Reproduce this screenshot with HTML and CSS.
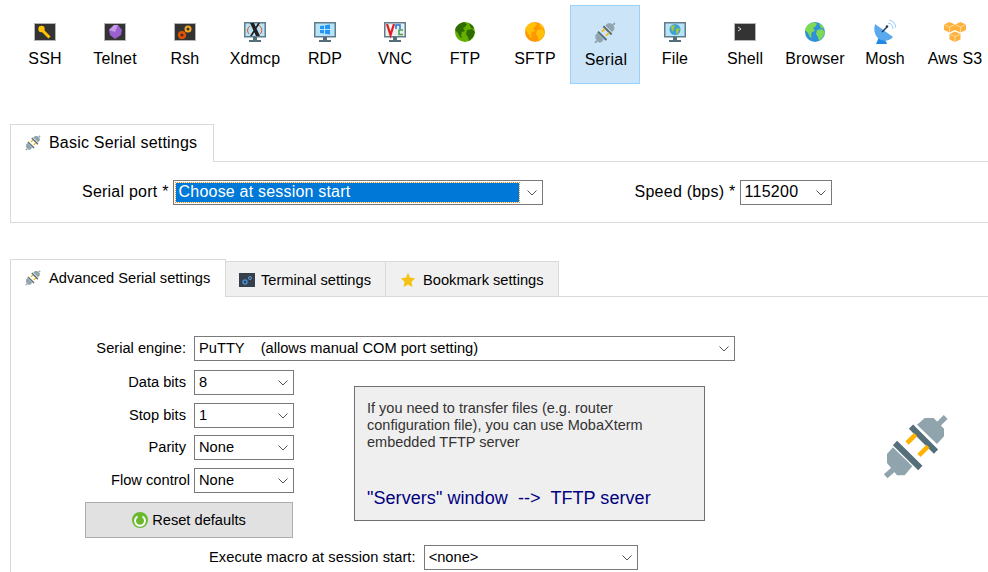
FILE: index.html
```html
<!DOCTYPE html>
<html lang="en">
<head>
<meta charset="utf-8">
<title>Serial session settings</title>
<link rel="stylesheet" href="styles.css">
</head>
<body>
<svg class="defs" width="0" height="0" aria-hidden="true">
  <defs>
    <symbol id="plug" viewBox="70 38 198 198">
      <path fill="#90a4ae" d="M172 70 195 50h27l31 32v23l-21 23zM100 138 82 158v27l30 37h23l23-27z"/>
      <path stroke="#90a4ae" stroke-width="16" fill="none" d="M235 70 258 47M78 225l22-20"/>
      <path stroke="#546e7a" stroke-width="18" fill="none" d="M154 76l75 75M106 125l76 75"/>
      <path stroke="#ffb300" stroke-width="14" fill="none" d="M142 125l26-25M178 162l27-27"/>
    </symbol>
    <symbol id="chev" viewBox="0 0 10 6">
      <path d="M.5.5 5 5 9.5.5" fill="none" stroke="#555" stroke-width="1"/>
    </symbol>
    <symbol id="globe-land" viewBox="0 0 20 20">
      <path d="M4 2 9 0l3 2-2 3-2 1 2 3-3 1-1 3 1 3-2-1-2-4-3-3 1-3zM12 8l5-1 3 3-2 5-4 4-1-4-2-3zM14 1l4 3 1 3-3-1-1-2z"/>
    </symbol>
    <symbol id="monitor" viewBox="0 0 22 20">
      <rect x=".75" y=".75" width="20.5" height="14" fill="#b9e3f8" stroke="#607d8b" stroke-width="1.5"/>
      <path fill="#546e7a" d="M9 15h4v3H9zM5 18h12v2H5z"/>
    </symbol>
  </defs>
</svg>

<nav class="toolbar">
  <div class="tool">
    <svg class="ico" width="22" height="18" viewBox="0 0 22 18"><rect x=".5" y=".5" width="21" height="17" fill="#333" stroke="#b5b5b5"/><circle cx="7.5" cy="6" r="3.2" fill="#ffc107"/><path d="M9 8l6.500 6.500" stroke="#ffc107" stroke-width="3"/></svg>
    <span>SSH</span>
  </div>
  <div class="tool">
    <svg class="ico" width="22" height="18" viewBox="0 0 22 18"><rect x=".5" y=".5" width="21" height="17" fill="#333" stroke="#b5b5b5"/><path fill="#9c5fd0" d="M10 2h4l4 5-1 5-6 4-5-4-1-5z"/><path fill="#c79be8" d="M10 2 5 7l6 2 3-7z"/></svg>
    <span>Telnet</span>
  </div>
  <div class="tool">
    <svg class="ico" width="22" height="18" viewBox="0 0 22 18"><rect x=".5" y=".5" width="21" height="17" fill="#333" stroke="#b5b5b5"/><circle cx="14" cy="6" r="2.5" fill="none" stroke="#f9a825" stroke-width="2"/><circle cx="8" cy="12" r="2.8" fill="none" stroke="#e65100" stroke-width="2.6"/></svg>
    <span>Rsh</span>
  </div>
  <div class="tool">
    <svg class="ico" width="22" height="20" viewBox="0 0 22 20"><use href="#monitor"/><path fill="none" stroke="#e65100" d="M14 3c4 1 5 7 2 9M6 4C3 6 3 10 5 12"/><path d="M6 1h4l6 13h-4zM14 1h2L8 14H6z" fill="#212121"/></svg>
    <span>Xdmcp</span>
  </div>
  <div class="tool">
    <svg class="ico" width="22" height="20" viewBox="0 0 22 20"><use href="#monitor"/><path fill="#2196f3" d="M6 4l4-.6V7H6zM11 3.3 16 2.5V7h-5zM6 8h4v3.6L6 11zM11 8h5v4.5l-5-.8z"/></svg>
    <span>RDP</span>
  </div>
  <div class="tool">
    <svg class="ico" width="22" height="20" viewBox="0 0 22 20"><rect x=".75" y=".75" width="20.5" height="14" fill="#eceff1" stroke="#607d8b" stroke-width="1.5"/><path fill="#546e7a" d="M9 15h4v3H9zM5 18h12v2H5z"/><path d="M3 2l3.500 11L10 2" fill="none" stroke="#e02020" stroke-width="2.2"/><path d="M12 7V3h4v4" fill="none" stroke="#1976d2" stroke-width="1.5"/><path d="M19 8h-4v4.500h4" fill="none" stroke="#43a047" stroke-width="1.5"/></svg>
    <span>VNC</span>
  </div>
  <div class="tool">
    <svg class="ico" width="20" height="20" viewBox="0 0 20 20"><circle cx="10" cy="10" r="10" fill="#64b000"/><use href="#globe-land" fill="#2e6b00"/></svg>
    <span>FTP</span>
  </div>
  <div class="tool">
    <svg class="ico" width="20" height="20" viewBox="0 0 20 20"><circle cx="10" cy="10" r="10" fill="#ff9800"/><use href="#globe-land" fill="#ffc107"/></svg>
    <span>SFTP</span>
  </div>
  <div class="tool tool-active">
    <svg class="ico" width="22" height="22"><use href="#plug"/></svg>
    <span>Serial</span>
  </div>
  <div class="tool">
    <svg class="ico" width="22" height="20" viewBox="0 0 22 20"><use href="#monitor"/><circle cx="11" cy="7.5" r="5.500" fill="#3f9fd8"/><path fill="#a8c832" d="M7 4l4-1-1 4-2 3zM12 7l4-1-2 5-2 1z"/></svg>
    <span>File</span>
  </div>
  <div class="tool">
    <svg class="ico" width="22" height="18" viewBox="0 0 22 18"><rect x=".5" y=".5" width="21" height="17" fill="#333" stroke="#b5b5b5"/><path d="M4 4l3 2-3 2" fill="none" stroke="#ddd"/></svg>
    <span>Shell</span>
  </div>
  <div class="tool">
    <svg class="ico" width="20" height="20" viewBox="0 0 20 20"><circle cx="10" cy="10" r="10" fill="#2f8fd8"/><use href="#globe-land" fill="#7ed957"/></svg>
    <span>Browser</span>
  </div>
  <div class="tool">
    <svg class="ico ico-dish" width="22" height="24" viewBox="0 0 22 24"><path fill="#1e88e5" d="M5 17h5l3 7H2z"/><path fill="#5aa9ec" d="M1 4 19 17C12 25-3 20 1 4z"/><path stroke="#1a3a6a" stroke-width="1.5" d="M8 12 13 7"/><circle cx="13" cy="6.500" r="1.300" fill="#1a3a6a"/><path fill="none" stroke="#90caf9" d="M14 3a6 6 0 0 1 5 6M15 0a9 9 0 0 1 7 8"/></svg>
    <span>Mosh</span>
  </div>
  <div class="tool">
    <svg class="ico" width="22" height="20" viewBox="0 0 22 20"><path fill="#ffb13d" d="M5.500 0 11 2.500V8L5.500 10.500 0 8V2.500zM16.500 0 22 2.500V8L16.500 10.500 11 8V2.500zM11 9.500 16.500 12V17.500L11 20 5.500 17.500V12z"/><path fill="none" stroke="#fff3d6" stroke-width=".6" d="M0 2.500 5.500 5 11 2.500M5.500 5v5.500M11 2.500 16.500 5 22 2.500M16.500 5v5.500M5.500 12 11 14.500 16.500 12M11 14.500V20"/></svg>
    <span>Aws S3</span>
  </div>
</nav>

<section class="group group-basic">
  <div class="tabs">
    <div class="tab tab-active tab-basic">
      <svg class="tab-ico" width="16" height="16"><use href="#plug"/></svg>
      <span>Basic Serial settings</span>
    </div>
  </div>
  <div class="panel basic-panel">
    <label class="lbl-big lbl-port">Serial port *</label>
    <div class="select select-port">
      <span class="focus-value">Choose at session start</span>
      <svg class="chev" width="10" height="6"><use href="#chev"/></svg>
    </div>
    <label class="lbl-big lbl-speed">Speed (bps) *</label>
    <div class="select select-speed">
      <span class="val-big">115200</span>
      <svg class="chev" width="10" height="6"><use href="#chev"/></svg>
    </div>
  </div>
</section>

<section class="group group-adv">
  <div class="tabs">
    <div class="tab tab-active tab-adv">
      <svg class="tab-ico" width="16" height="16"><use href="#plug"/></svg>
      <span>Advanced Serial settings</span>
    </div>
    <div class="tab tab-idle tab-term">
      <svg class="tab-ico" width="16" height="14" viewBox="0 0 16 14"><rect width="16" height="14" fill="#37404a"/><circle cx="6" cy="9" r="2" fill="none" stroke="#3f8fd8" stroke-width="1.5"/><circle cx="11" cy="5" r="1.5" fill="none" stroke="#5aa0e0"/></svg>
      <span>Terminal settings</span>
    </div>
    <div class="tab tab-idle tab-book">
      <svg class="tab-ico" width="16" height="16" viewBox="0 0 16 16"><path fill="#f5c211" d="M8 1l2.200 4.700 5 .6-3.700 3.500 1 5.100L8 12.400 3.500 14.900l1-5.100L.8 6.300l5-.6z"/></svg>
      <span>Bookmark settings</span>
    </div>
  </div>
  <div class="panel adv-panel">
    <div class="row row-engine">
      <label class="lbl lbl-col">Serial engine:</label>
      <div class="select select-engine">
        <span class="val val-pre">PuTTY    (allows manual COM port setting)</span>
        <svg class="chev" width="10" height="6"><use href="#chev"/></svg>
      </div>
    </div>
    <div class="middle">
      <div class="fields">
        <div class="row"><label class="lbl lbl-col">Data bits</label><div class="select select-small"><span class="val">8</span><svg class="chev" width="10" height="6"><use href="#chev"/></svg></div></div>
        <div class="row row-wide"><label class="lbl lbl-col">Stop bits</label><div class="select select-small"><span class="val">1</span><svg class="chev" width="10" height="6"><use href="#chev"/></svg></div></div>
        <div class="row"><label class="lbl lbl-col">Parity</label><div class="select select-small"><span class="val">None</span><svg class="chev" width="10" height="6"><use href="#chev"/></svg></div></div>
        <div class="row row-wide"><label class="lbl lbl-col lbl-flow">Flow control</label><div class="select select-small"><span class="val">None</span><svg class="chev" width="10" height="6"><use href="#chev"/></svg></div></div>
        <div class="reset">
          <svg width="16" height="16" viewBox="0 0 16 16"><circle cx="8" cy="8" r="8" fill="#6ab82e"/><path d="M5.500 4.500a5 5 0 1 0 5 0" fill="none" stroke="#fff" stroke-width="2"/></svg>
          <span>Reset defaults</span>
        </div>
      </div>
      <div class="info">
        <p class="info-text">If you need to transfer files (e.g. router configuration file), you can use MobaXterm embedded TFTP server</p>
        <p class="info-link">"Servers" window  --&gt;  TFTP server</p>
      </div>
      <svg class="big-plug" width="66" height="66"><use href="#plug"/></svg>
    </div>
    <div class="row row-macro">
      <label class="lbl">Execute macro at session start:</label>
      <div class="select select-macro">
        <span class="val">&lt;none&gt;</span>
        <svg class="chev" width="10" height="6"><use href="#chev"/></svg>
      </div>
    </div>
  </div>
</section>
</body>
</html>
```
FILE: styles.css
```css
* { box-sizing: border-box; }
html, body { margin: 0; height: 572px; overflow: hidden; }
body { background: #fff; color: #000; font-family: "Liberation Sans", Arial, sans-serif; }
.defs { position: absolute; }

.toolbar { display: flex; padding: 5px 0 0 10px; height: 84px; }
.tool { flex: none; width: 70px; height: 79px; display: flex; flex-direction: column; align-items: center; font-size: 16px; letter-spacing: .12px; }
.tool .ico { height: 22px; margin-top: 16px; display: block; }
.tool .ico-dish { height: 24px; margin-top: 15px; margin-bottom: -1px; }
.tool span { margin-top: 7px; line-height: 18px; white-space: nowrap; }
.tool-active { background: #cce4f7; border: 1px solid #99d1ff; }
.tool-active span { letter-spacing: .3px; padding-left: 2px; }

.group { margin-left: 10px; }
.group-basic { margin-top: 40px; }
.group-adv { margin-top: 36px; }

.tabs { display: flex; align-items: flex-end; height: 37px; }
.tab { display: flex; align-items: center; border: 1px solid #d9d9d9; border-bottom: 0; white-space: nowrap; }
.tab-active { background: #fff; height: 38px; margin-bottom: -1px; padding-bottom: 2px; position: relative; z-index: 1; }
.tab-basic { width: 204px; padding-left: 14px; font-size: 16px; letter-spacing: .2px; }
.tab-adv { width: 216px; padding-left: 14px; font-size: 14.67px; }
.tab-idle { background: #f0f0f0; height: 35px; padding-top: 2px; font-size: 14.67px; margin-left: -1px; }
.tab-adv + .tab-idle { margin-left: 0; border-left: 0; }
.tab-term { width: 160px; padding-left: 13px; }
.tab-book { width: 174px; padding-left: 14px; }
.tab-ico { flex: none; margin-right: 8px; }
.tab-term .tab-ico { margin-right: 6px; }
.tab-book .tab-ico { margin-right: 7px; }

.panel { border-top: 1px solid #d9d9d9; border-left: 1px solid #d9d9d9; }
.basic-panel { height: 62px; border-bottom: 1px solid #d9d9d9; display: flex; align-items: flex-start; padding-top: 18px; }
.lbl-big { font-size: 16px; letter-spacing: .23px; line-height: 24px; white-space: nowrap; }
.lbl-port { margin-left: 71px; }
.lbl-speed { margin-left: 92px; }

.select { display: flex; align-items: center; justify-content: space-between; height: 25px; background: #fff; border: 1px solid #7a7a7a; padding-right: 5px; flex: none; }
.select-port { width: 370px; margin-left: 4px; padding: 2px 5px 2px 2px; }
.select-speed { width: 92px; margin-left: 5px; }
.focus-value { width: 343px; height: 19px; line-height: 17px; background: #0078d7; color: #fff; font-size: 16px; letter-spacing: .2px; padding-left: 3px; outline: 1px dotted #e08a20; }
.val-big { font-size: 16px; letter-spacing: .3px; padding: 0 0 2px 3px; }
.val { font-size: 14.67px; padding: 0 0 2px 4px; white-space: nowrap; }
.val-pre { white-space: pre; }
.chev { flex: none; }

.adv-panel { height: 277px; padding-top: 39px; }
.row { display: flex; align-items: center; height: 25px; }
.lbl { font-size: 14.67px; white-space: nowrap; text-align: right; padding-bottom: 2px; }
.lbl-col { width: 175px; margin-right: 8px; }
.lbl-col.lbl-flow { width: 179px; margin-right: 4px; }
.select-engine { width: 541px; }
.select-small { width: 100px; }

.middle { display: flex; align-items: flex-start; margin-top: 9px; }
.fields { display: flex; flex-direction: column; gap: 7px; width: 283px; flex: none; }
.row-wide { margin-top: 1px; }
.reset { display: flex; align-items: center; justify-content: center; gap: 4px; width: 208px; height: 36px; margin: 2px 0 0 74px; background: #e1e1e1; border: 1px solid #adadad; font-size: 14.67px; }

.info { width: 351px; height: 135px; margin: 16px 0 0 60px; background: #efefef; border: 1px solid #707070; padding: 13px 12px; flex: none; }
.info p { margin: 0; }
.info-text { font-size: 14.5px; line-height: 17px; color: #333; width: 320px; }
.info .info-link { margin-top: 38px; font-size: 18px; letter-spacing: .06px; line-height: 18px; color: #000080; white-space: pre; }
.big-plug { margin: 44px 0 0 178px; flex: none; }

.row-macro { margin-top: 7px; justify-content: flex-start; padding-left: 198px; }
.row-macro .lbl { margin-right: 8px; letter-spacing: .07px; }
.select-macro { width: 214px; }
```
